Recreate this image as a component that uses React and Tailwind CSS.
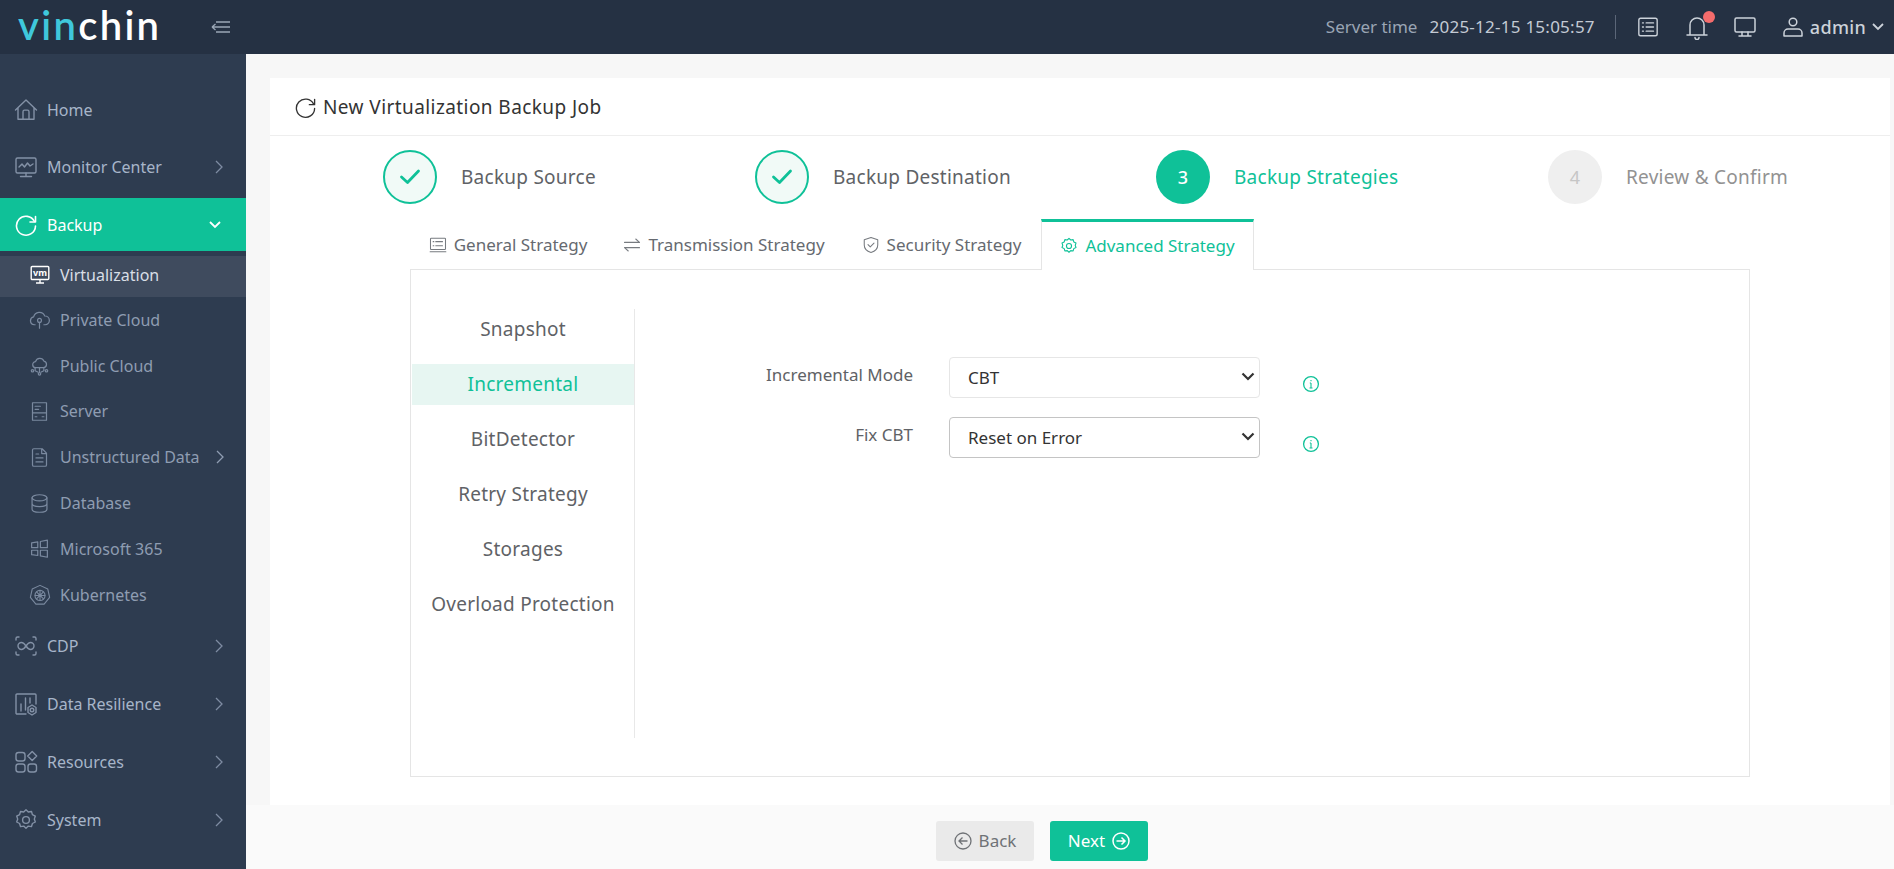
import React from "react";

const S = ({ w = 20, h = 20, vb = "0 0 24 24", sw = 1.4, children, className = "" }) => (
  <svg width={w} height={h} viewBox={vb} fill="none" stroke="currentColor" strokeWidth={sw} strokeLinecap="round" strokeLinejoin="round" className={className + " shrink-0"}>
    {children}
  </svg>
);

const Home = () => (<S w={24} h={24}><path d="M1.5 12 12 2l10.5 10M4 10v11.2h16V10M9 21.2v-7.5c0-1 .6-1.6 1.5-1.6h3c.9 0 1.5.6 1.5 1.6v7.5" /></S>);
const Monitor = () => (<S w={24} h={24}><rect x="2" y="3" width="20" height="15" rx="1.5" /><path d="M5 12l3-3 2.5 3 3-4 2.5 3 3-2M12 18v3M6.5 21.5h11" /></S>);
const Refresh = ({ w = 24, sw = 1.6 }) => (<S w={w} h={w} sw={sw}><path d="M20.5 8.5A9.5 9.5 0 1 0 21.5 13" /><path d="M21.5 3.5v5.500H16" /></S>);
const Vm = () => (
  <svg width="20" height="20" viewBox="0 0 20 20" className="shrink-0">
    <rect x="1.2" y="1.5" width="17.6" height="13" rx="1" fill="none" stroke="currentColor" strokeWidth="1.4" />
    <text x="10" y="10.8" textAnchor="middle" fontSize="9" fontWeight="700" fill="currentColor" fontFamily="Noto Sans, sans-serif">vm</text>
    <path d="M10 14.5v3M6 18h8" stroke="currentColor" strokeWidth="1.4" />
  </svg>
);
const PCloud = () => (<S w={21} h={21}><path d="M7 18H6a4.5 4.5 0 0 1-.7-8.9A6.7 6.7 0 0 1 18 8a5 5 0 0 1 .5 10H17" /><circle cx="12" cy="13" r="2.2" /><path d="M12 15.2V22" /></S>);
const PubCloud = () => (<S w={21} h={21}><path d="M8 14.5a3.5 3.5 0 0 1-.5-7A5 5 0 0 1 17 7a3.8 3.8 0 0 1-.5 7.5zM12 14.5V20M7 15v3l3 1.5M17 15v3l-3 1.5" /><circle cx="12" cy="21.5" r="1.4" /><circle cx="4" cy="18" r="1.4" /><circle cx="20" cy="18" r="1.4" /></S>);
const Server = () => (<S w={21} h={21}><rect x="4" y="2" width="16" height="20" /><path d="M4 13.5h16M7 6h6M7 9.5h4M7 18h2M15 18h2" /></S>);
const Doc = () => (<S w={21} h={21}><path d="M4 3.5A1.5 1.5 0 0 1 5.5 2H15l5 5v13.5a1.5 1.5 0 0 1-1.5 1.5h-13A1.5 1.5 0 0 1 4 20.5zM14.5 2.5v5H20M8 8h3M8 12.5h8M8 17h8" /></S>);
const Db = () => (<S w={21} h={21}><ellipse cx="12" cy="5.5" rx="8.5" ry="3.5" /><path d="M3.5 5.5v13c0 2 3.8 3.5 8.5 3.5s8.5-1.5 8.5-3.5v-13M3.5 12c0 2 3.8 3.5 8.5 3.5s8.5-1.5 8.5-3.5" /></S>);
const Win = () => (<S w={21} h={21}><path d="M3 5.5l7-1v6.5H3zM13 4l8-1.5V11h-8zM3 14h7v6l-7-1zM13 14h8v8l-8-1.5z" /></S>);
const Kube = () => (<S w={22} h={22} sw={1.2}><path d="M12 1.5l8.5 4 2 9-6 7.5h-9l-6-7.5 2-9z" /><circle cx="12" cy="12.5" r="5.5" /><circle cx="12" cy="12.5" r="1.2" /><path d="M12 7v11M6.700 12.5h10.600M8.200 8.700l7.600 7.600M15.800 8.700l-7.600 7.600" /></S>);
const Cdp = () => (<S w={24} h={24}><path d="M5 3H3.5A1.5 1.5 0 0 0 2 4.5V6M19 3h1.5A1.5 1.5 0 0 1 22 4.5V6M5 21H3.5A1.5 1.5 0 0 1 2 19.5V18M19 21h1.5a1.5 1.5 0 0 0 1.5-1.5V18" /><path d="M12 12c-1.5-2.3-3-3.5-4.5-3.5a3.500 3.500 0 0 0 0 7c1.500 0 3-1.200 4.500-3.500zm0 0c1.500-2.300 3-3.500 4.500-3.500a3.500 3.500 0 0 1 0 7c-1.500 0-3-1.200-4.500-3.500z" /></S>);
const Resil = () => (<S w={24} h={24}><path d="M12 22H3a1 1 0 0 1-1-1V3a1 1 0 0 1 1-1h18a1 1 0 0 1 1 1v9" /><path d="M7 19v-7M11.5 18V6M16 11V6" /><circle cx="18" cy="18" r="1.8" /><path d="M18 13l4 2.5v5L18 23l-4-2.5v-5z" /></S>);
const Res = () => (<S w={24} h={24}><rect x="2" y="2.5" width="9" height="8.5" rx="2.5" /><rect x="2" y="14" width="9" height="8" rx="2.5" /><rect x="14" y="14" width="8.5" height="8" rx="2.5" /><path d="M18.2 1.5l4.5 4.5-4.5 4.5L13.7 6z" /></S>);
const Gear = ({ w = 24, sw = 1.4 }) => (<S w={w} h={w} sw={sw}><path d="M12 1.8l2.3 2.2 3.2-.5.9 3.1 2.9 1.5-1 3 1 2.900-2.900 1.500-.9 3.100-3.200-.5-2.300 2.200-2.300-2.200-3.200.5-.9-3.100-2.900-1.500 1-2.900-1-3 2.900-1.500.9-3.100 3.200.5z" /><circle cx="12" cy="12" r="3.4" /></S>);

const Right = () => (<svg width="10" height="14" viewBox="0 0 10 14" fill="none" stroke="currentColor" strokeWidth="1.3" className="shrink-0"><path d="M2 1l6 6-6 6" /></svg>);
const Down = () => (<svg width="14" height="10" viewBox="0 0 14 10" fill="none" stroke="currentColor" strokeWidth="1.8" className="shrink-0"><path d="M2 2l5 5 5-5" /></svg>);

const top1 = [
  ["Home", Home, false],
  ["Monitor Center", Monitor, true],
];
const subs = [
  ["Private Cloud", PCloud],
  ["Public Cloud", PubCloud],
  ["Server", Server],
  ["Unstructured Data", Doc, true],
  ["Database", Db],
  ["Microsoft 365", Win],
  ["Kubernetes", Kube],
];
const top2 = [
  ["CDP", Cdp],
  ["Data Resilience", Resil],
  ["Resources", Res],
  ["System", Gear],
];

function Sidebar() {
  return (
    <aside className="w-[246px] shrink-0 bg-[#2e3c50] text-[16px] text-[#a7b5c9] pt-[27.5px]">
      {top1.map(([t, I, c]) => (
        <div key={t} className="h-[57px] flex items-center pl-[14px] pr-[22px]">
          <span className="w-[33px] text-[#8391a6] flex"><I /></span>
          <span className="flex-1">{t}</span>
          {c && <span className="text-[#7e8ca2] flex"><Right /></span>}
        </div>
      ))}
      <div className="mt-[2.5px] h-[53px] bg-[#0fc198] text-white flex items-center pl-[14px] pr-[24px]">
        <span className="w-[33px] flex"><Refresh /></span>
        <span className="flex-1">Backup</span>
        <Down />
      </div>
      <div className="mt-[5px] h-[41px] bg-[#3f4b5e] text-white flex items-center pl-[30px] pb-[3px]">
        <span className="w-[30px] flex"><Vm /></span>
        <span className="text-[#d9dee6]">Virtualization</span>
      </div>
      {subs.map(([t, I, c]) => (
        <div key={t} className="h-[45.8px] flex items-center pl-[29px] pr-[21px] text-[#8f9db2]">
          <span className="w-[31px] text-[#7a899f] flex"><I /></span>
          <span className="flex-1">{t}</span>
          {c && <span className="text-[#8f9db2] flex"><Right /></span>}
        </div>
      ))}
      <div>
        {top2.map(([t, I]) => (
          <div key={t} className="h-[57.8px] flex items-center pl-[14px] pr-[22px]">
            <span className="w-[33px] text-[#8391a6] flex"><I /></span>
            <span className="flex-1">{t}</span>
            <span className="text-[#7e8ca2] flex"><Right /></span>
          </div>
        ))}
      </div>
    </aside>
  );
}

function Header() {
  return (
    <header className="h-[54px] bg-[#253143] flex items-center pr-[9px]">
      <div className="w-[246px] shrink-0 flex items-center pl-[18px]">
        <span className="font-['Lato',sans-serif] font-semibold text-[40px] leading-none tracking-[2.3px] -mt-[5px]">
          <span className="text-[#3fc8dc]">vin</span>
          <span className="text-white">chin</span>
        </span>
        <svg width="19" height="16" viewBox="0 0 19 16" fill="none" stroke="#9aa6b6" strokeWidth="1.3" className="ml-[50px] shrink-0">
          <path d="M1 8h18M5 3h14M5 13h14M1 8l3.5-3M1 8l3.5 3" />
        </svg>
      </div>
      <div className="flex-1" />
      <span className="text-[17px] text-[#9aa5b4]">Server time</span>
      <span className="text-[17px] text-[#c3cad4] ml-[12px] tracking-[0.25px]">2025-12-15 15:05:57</span>
      <span className="ml-[20px] w-px h-[24px] bg-[#5b6678]" />
      <span className="ml-[21px] text-[#ccd2da] flex">
        <S w={22} h={24} sw={1.5}><rect x="2" y="2.5" width="20" height="19" rx="2" /><path d="M6 7.5h1M10 7.5h8M6 12h1M10 12h8M6 16.5h1M10 16.5h8" /></S>
      </span>
      <span className="ml-[26px] text-[#ccd2da] flex relative">
        <S w={24} h={26} sw={1.5}><path d="M2 20h20M5 20V10a7 7 0 0 1 14 0v10M10 22.5a2 2 0 0 0 4 0" /></S>
        <span className="absolute -top-[3px] right-[-6px] w-[12px] h-[12px] rounded-full bg-[#f56c6c]" />
      </span>
      <span className="ml-[24px] text-[#ccd2da] flex">
        <S w={24} h={24} sw={1.5}><rect x="2" y="3" width="20" height="14" rx="1.5" /><path d="M9 17v4M15 17v4M6 21h12" /></S>
      </span>
      <span className="ml-[24px] text-[#ccd2da] flex">
        <S w={24} h={24} sw={1.5}><circle cx="12" cy="7" r="3.8" /><path d="M3 21v-3a4 4 0 0 1 4-4h10a4 4 0 0 1 4 4v3z" /></S>
      </span>
      <span className="text-[18px] text-[#ccd2da] ml-[5px] font-medium tracking-[0.3px]">admin</span>
      <span className="text-[#ccd2da] ml-[5px] flex"><Down /></span>
    </header>
  );
}

const Check = () => (
  <svg width="22" height="18" viewBox="0 0 22 18" fill="none" stroke="#0fc198" strokeWidth="2.8" strokeLinecap="round" strokeLinejoin="round"><path d="M2.5 9l6 5.5L19.5 3" /></svg>
);

function Steps() {
  const items = [
    { t: "Backup Source", w: "w-[372px]", done: true },
    { t: "Backup Destination", w: "w-[401px]", done: true },
    { t: "Backup Strategies", w: "w-[392px]", cur: true, n: 3 },
    { t: "Review & Confirm", w: "w-[280px]", n: 4 },
  ];
  return (
    <div className="flex pl-[113px] pt-[14px] h-[83px]">
      {items.map((s) => (
        <div key={s.t} className={s.w + " flex items-center h-[54px] shrink-0"}>
          <span
            className={
              "w-[54px] h-[54px] rounded-full flex items-center justify-center shrink-0 text-[18px] " +
              (s.done ? "border-2 border-[#0fc198] bg-[#f1faf7]" : s.cur ? "bg-[#0fc198] text-white font-medium" : "bg-[#efefef] text-[#c6c6c6]")
            }
          >
            {s.done ? <Check /> : s.n}
          </span>
          <span className={"ml-[24px] text-[19px] tracking-[0.25px] " + (s.done ? "text-[#606266]" : s.cur ? "text-[#0fc198]" : "text-[#929292]")}>{s.t}</span>
        </div>
      ))}
    </div>
  );
}

function Tabs() {
  const tabs = [
    ["General Strategy", "w-[196px]", <S w={18} h={18} key="a"><rect x="2" y="3" width="20" height="15" rx="1" /><path d="M1.5 21h21M5.5 7.5h1M9 7.5h9M5.5 13h1M9 13h9" /></S>],
    ["Transmission Strategy", "w-[236px]", <S w={18} h={18} key="b"><path d="M2 8.5h20L17 4M22 15.5H2L7 20" /></S>],
    ["Security Strategy", "w-[199px]", <S w={18} h={18} key="c"><path d="M12 2l9 3v7c0 5-4 8.5-9 10-5-1.5-9-5-9-10V5z" /><path d="M8 11.5l3 3 5-5" /></S>],
  ];
  return (
    <div className="flex ml-[140px] h-[50px] relative z-10">
      {tabs.map(([t, w, icon]) => (
        <div key={t} className={w + " flex items-center justify-center gap-[7px] text-[17px] text-[#666a70] h-[50px] pt-[2px]"}>
          <span className="text-[#777b80] flex">{icon}</span>
          <span>{t}</span>
        </div>
      ))}
      <div className="w-[213px] h-[51px] bg-white border-t-[3px] border-x border-t-[#0fc198] border-x-[#e5e5e5] flex items-center justify-center gap-[7px] text-[17px] text-[#0fc198]">
        <Gear w={18} sw={1.5} />
        <span>Advanced Strategy</span>
      </div>
    </div>
  );
}

const Info = () => (
  <svg width="18" height="18" viewBox="0 0 18 18" fill="none" stroke="#0fc198" strokeWidth="1.3" className="shrink-0"><circle cx="9" cy="9" r="7.4" /><path d="M9 8v5M9 5v1.3M7.8 8H9M7.5 13h3" strokeWidth="1.1" /></svg>
);

function Field({ label, value, border, className = "" }) {
  return (
    <div className={"flex " + className}>
      <span className="w-[314px] text-right pr-[36px] text-[17px] text-[#606266] leading-[36px]">{label}</span>
      <span className="relative w-[311px] h-[41px] flex">
        <select
          defaultValue={value}
          className={"appearance-none w-full h-full rounded-[4px] bg-white pl-[18px] text-[17px] text-[#333] border " + border}
        >
          <option>{value}</option>
        </select>
        <svg width="14" height="9" viewBox="0 0 14 9" fill="none" stroke="#333" strokeWidth="2.2" className="absolute right-[5px] top-[15px] pointer-events-none">
          <path d="M1.5 1.5 7 7l5.5-5.5" />
        </svg>
      </span>
      <span className="ml-[42px] mt-[18px] flex"><Info /></span>
    </div>
  );
}

function Panel() {
  const items = ["Snapshot", "Incremental", "BitDetector", "Retry Strategy", "Storages", "Overload Protection"];
  return (
    <div className="ml-[140px] w-[1340px] h-[508px] border border-[#e5e5e5] flex items-start pt-[39px]">
      <div className="w-[223px] h-[429px] shrink-0 border-r border-[#e8e8e8] ml-[1px] flex flex-col gap-[14px]">
        {items.map((t, i) => (
          <div
            key={t}
            className={
              "h-[41px] flex items-center justify-center text-[19px] tracking-[0.25px] " +
              (i === 1 ? "bg-[#e7f6f2] text-[#0fc198]" : "text-[#606266]")
            }
          >
            {t}
          </div>
        ))}
      </div>
      <div className="pt-[48px]">
        <Field label="Incremental Mode" value="CBT" border="border-[#e6e6e6]" />
        <Field label="Fix CBT" value="Reset on Error" border="border-[#c4c4c4]" className="mt-[19px]" />
      </div>
    </div>
  );
}

function Footer() {
  return (
    <div className="h-[64px] bg-[#fafafa] flex items-start justify-center gap-[16px] pt-[16px] pr-[56px]">
      <button className="w-[98px] h-[40px] rounded-[3px] bg-[#eaeaea] text-[#6f7276] text-[17px] flex items-center justify-center gap-[7px]">
        <svg width="18" height="18" viewBox="0 0 18 18" fill="none" stroke="currentColor" strokeWidth="1.3"><circle cx="9" cy="9" r="8" /><path d="M13.5 9H5M8.5 5.5 5 9l3.5 3.5" /></svg>
        Back
      </button>
      <button className="w-[98px] h-[40px] rounded-[3px] bg-[#0fc198] text-white text-[17px] flex items-center justify-center gap-[7px]">
        Next
        <svg width="18" height="18" viewBox="0 0 18 18" fill="none" stroke="currentColor" strokeWidth="1.5"><circle cx="9" cy="9" r="8" /><path d="M4.5 9H13M9.5 5.5 13 9l-3.5 3.5" /></svg>
      </button>
    </div>
  );
}

export default function App() {
  return (
    <div className="h-[869px] w-[1894px] overflow-hidden flex flex-col bg-[#f7f7f7] font-['Noto_Sans',sans-serif]">
      <Header />
      <div className="flex flex-1 min-h-0">
        <Sidebar />
        <main className="flex-1 flex flex-col min-w-0">
          <div className="flex-1 pl-[24px] pr-[4px] pt-[24px] min-h-0">
            <div className="h-[727px] bg-white">
              <div className="h-[58px] border-b border-[#eeeeee] flex items-center pl-[24px] pt-[1px] gap-[3px] text-[19px] text-[#333] tracking-[0.42px]">
                <Refresh w={23} sw={1.4} />
                <span className="ml-[3px]">New Virtualization Backup Job</span>
              </div>
              <Steps />
              <Tabs />
              <Panel />
            </div>
          </div>
          <Footer />
        </main>
      </div>
    </div>
  );
}
